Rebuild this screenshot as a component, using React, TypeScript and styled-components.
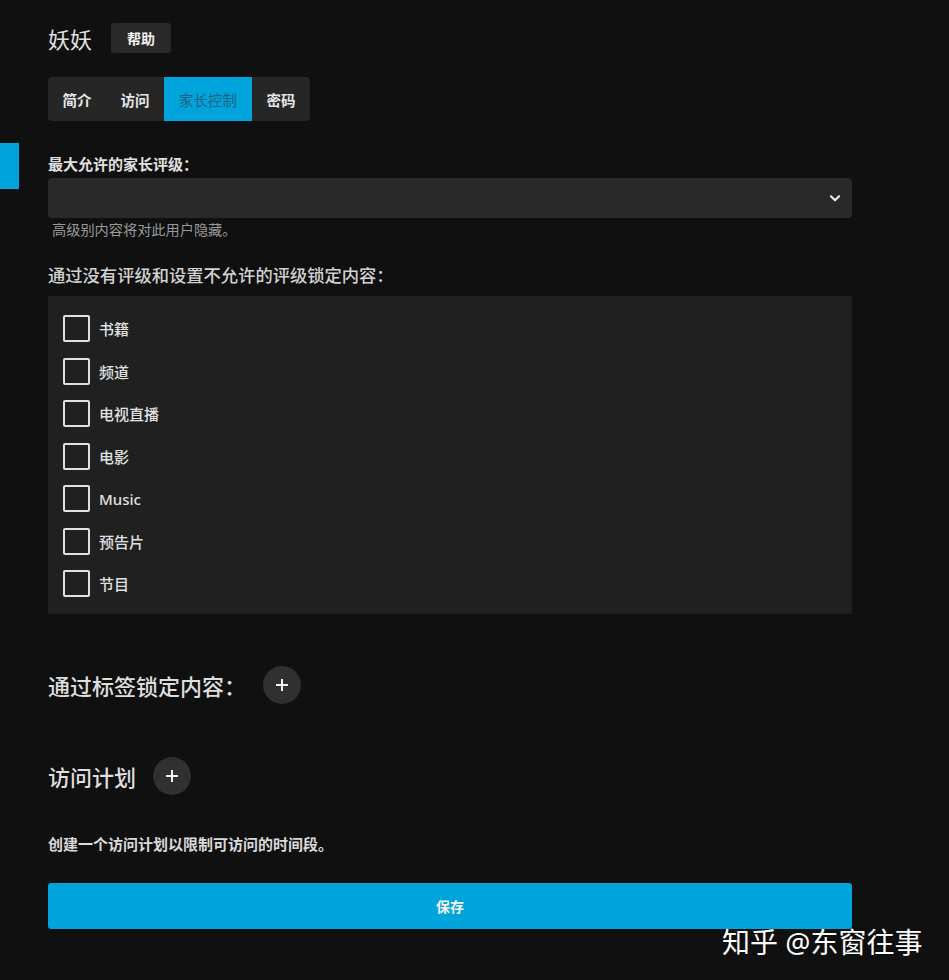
import { FC } from "react";
import styled, { createGlobalStyle } from "styled-components";

const GlobalStyle = createGlobalStyle`
  html, body {
    margin: 0;
    padding: 0;
    background: #101010;
  }
  body {
    font-family: "Noto Sans", "Noto Sans CJK SC", sans-serif;
    color: #dcdcdc;
  }
`;

const Page = styled.div`
  position: relative;
  min-height: 980px;
  background: #101010;
  padding: 23px 97px 0 48px;
  box-sizing: border-box;
`;

const SideMarker = styled.div`
  position: absolute;
  left: 0;
  top: 143px;
  width: 19px;
  height: 46px;
  background: #00a4dc;
`;

const TitleRow = styled.div`
  display: flex;
  align-items: center;
  gap: 19px;
  height: 30px;
`;

const Title = styled.h1`
  margin: 0;
  font-size: 22px;
  font-weight: 400;
  color: #e0e0e0;
`;

const HelpButton = styled.button`
  height: 30px;
  padding: 0 16px;
  border: none;
  border-radius: 3px;
  background: #292929;
  color: #f2f2f2;
  font-family: inherit;
  font-size: 14px;
  font-weight: 700;
`;

const Tabs = styled.div`
  display: inline-flex;
  margin-top: 24px;
  height: 44px;
  border-radius: 4px;
  overflow: hidden;
  background: #262626;
`;

const Tab = styled.div<{ $active?: boolean }>`
  display: flex;
  align-items: center;
  padding: 0 ${(p) => (p.$active ? "15px" : "14.5px")};
  font-size: 14.5px;
  font-weight: ${(p) => (p.$active ? 400 : 600)};
  background: ${(p) => (p.$active ? "#00a4dc" : "transparent")};
  color: ${(p) => (p.$active ? "#1f6384" : "#e6e6e6")};
`;

const FieldLabel = styled.div`
  margin-top: 33px;
  line-height: 20px;
  font-size: 15px;
  font-weight: 700;
  color: #e0e0e0;
`;

const Select = styled.div`
  margin-top: 4px;
  height: 40px;
  border-radius: 4px;
  background: #292929;
  display: flex;
  align-items: center;
  justify-content: flex-end;
  padding-right: 10px;
`;

const Hint = styled.div`
  margin-top: 3px;
  padding-left: 4px;
  line-height: 18px;
  font-size: 14.2px;
  color: #9a9a9a;
`;

const SectionHeading = styled.div`
  margin-top: 26px;
  line-height: 22px;
  font-size: 17.3px;
  font-weight: 500;
  color: #d2d2d2;
`;

const CheckPanel = styled.div`
  margin-top: 9px;
  background: #202020;
  padding: 19px 15px 17px;
  display: flex;
  flex-direction: column;
  gap: 15.5px;
`;

const CheckRow = styled.label`
  display: flex;
  align-items: center;
  gap: 9px;
  height: 27px;
  font-size: 15px;
  font-weight: 500;
  color: #e0e0e0;
`;

const Box = styled.span`
  width: 27px;
  height: 27px;
  box-sizing: border-box;
  border: 2px solid #e0e0e0;
  border-radius: 2px;
`;

const AddRow = styled.div<{ $top: number }>`
  display: flex;
  align-items: center;
  gap: 17px;
  margin-top: ${(p) => p.$top}px;
  height: 38px;
`;

const AddHeading = styled.h2`
  margin: 0;
  font-size: 22px;
  font-weight: 500;
  color: #dedede;
`;

const RoundButton = styled.button`
  width: 38px;
  height: 38px;
  border-radius: 50%;
  border: none;
  background: #303030;
  display: flex;
  align-items: center;
  justify-content: center;
  padding: 0;
`;

const Description = styled.div`
  margin-top: 39px;
  line-height: 20px;
  font-size: 15px;
  font-weight: 700;
  color: #dadada;
`;

const SaveButton = styled.button`
  display: block;
  width: 100%;
  margin-top: 29px;
  height: 46px;
  border: none;
  border-radius: 3px;
  background: #00a4dc;
  color: #f4f4f4;
  font-family: inherit;
  font-size: 14px;
  font-weight: 700;
`;

const Watermark = styled.div`
  position: absolute;
  left: 722px;
  top: 921px;
  font-size: 28px;
  color: #ffffff;
  white-space: nowrap;
  text-shadow: 0 0 2px rgba(0, 0, 0, 0.6);
`;

const Chevron: FC = () => (
  <svg width="14" height="14" viewBox="0 0 24 24" fill="none" stroke="#eeeeee" strokeWidth="3.5" strokeLinecap="round" strokeLinejoin="round">
    <polyline points="5 9 12 16 19 9" />
  </svg>
);

const Plus: FC = () => (
  <svg width="14" height="14" viewBox="0 0 14 14" stroke="#f2f2f2" strokeWidth="2">
    <line x1="7" y1="1" x2="7" y2="13" />
    <line x1="1" y1="7" x2="13" y2="7" />
  </svg>
);

const categories = ["书籍", "频道", "电视直播", "电影", "Music", "预告片", "节目"];

const App: FC = () => {
  return (
    <Page>
      <GlobalStyle />
      <SideMarker />
      <TitleRow>
        <Title>妖妖</Title>
        <HelpButton>帮助</HelpButton>
      </TitleRow>
      <Tabs>
        <Tab>简介</Tab>
        <Tab>访问</Tab>
        <Tab $active>家长控制</Tab>
        <Tab>密码</Tab>
      </Tabs>

      <FieldLabel>最大允许的家长评级：</FieldLabel>
      <Select>
        <Chevron />
      </Select>
      <Hint>高级别内容将对此用户隐藏。</Hint>

      <SectionHeading>通过没有评级和设置不允许的评级锁定内容：</SectionHeading>
      <CheckPanel>
        {categories.map((c) => (
          <CheckRow key={c}>
            <Box />
            {c}
          </CheckRow>
        ))}
      </CheckPanel>

      <AddRow $top={52}>
        <AddHeading>通过标签锁定内容：</AddHeading>
        <RoundButton>
          <Plus />
        </RoundButton>
      </AddRow>

      <AddRow $top={53}>
        <AddHeading>访问计划</AddHeading>
        <RoundButton>
          <Plus />
        </RoundButton>
      </AddRow>

      <Description>创建一个访问计划以限制可访问的时间段。</Description>
      <SaveButton>保存</SaveButton>

      <Watermark>知乎 @东窗往事</Watermark>
    </Page>
  );
};

export default App;
